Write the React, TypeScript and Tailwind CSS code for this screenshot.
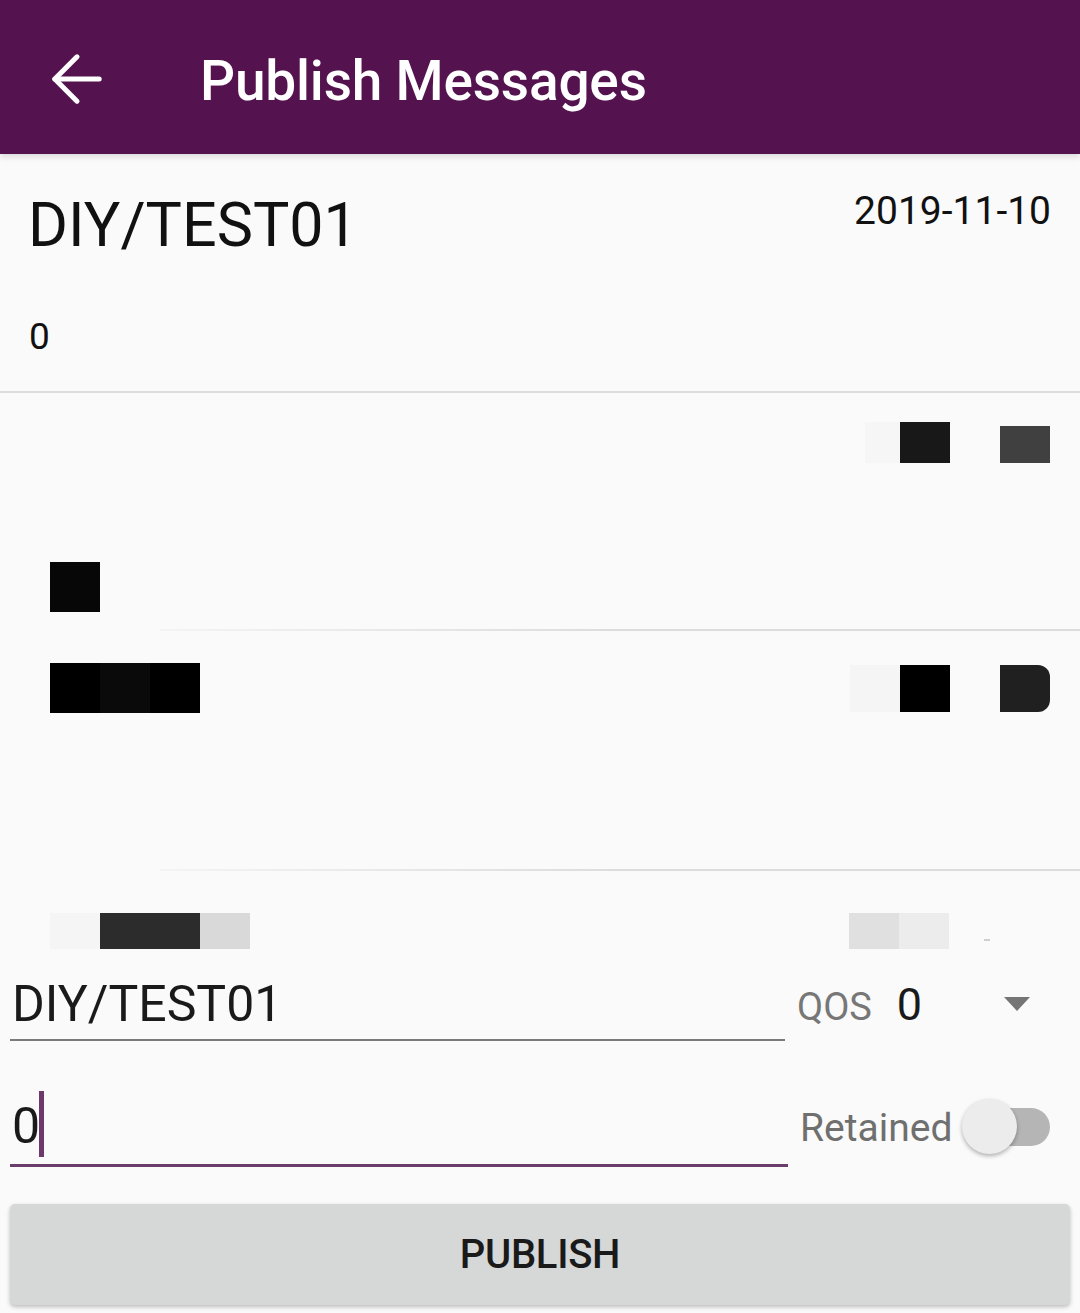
import { ArrowLeft } from 'lucide-react';

// Redacted row placeholder blocks (pixelated in the source screenshot)
function Block({ className }: { className: string }) {
  return <div className={`h-[50px] w-[50px] ${className}`} />;
}

export default function App() {
  return (
    <div className="w-[1080px] h-[1313px] bg-[#fafafa] flex flex-col overflow-hidden font-['Roboto',sans-serif]">
      {/* Toolbar */}
      <header className="h-[154px] shrink-0 bg-[#54134f] flex items-start shadow-[0_3px_6px_rgba(0,0,0,0.12)] z-10">
        <ArrowLeft className="ml-[39px] mt-[41px] w-[76px] h-[76px] text-white" strokeWidth={1.6} />
        <h1 className="ml-[85px] mt-[54px] text-[55px] leading-none font-medium text-white tracking-[-0.2px]">
          Publish Messages
        </h1>
      </header>

      {/* Message list */}
      <div className="flex flex-col">
        {/* Item 1 */}
        <div className="h-[237px] pl-[28px] pr-[29px] pt-[38px] flex flex-col">
          <div className="flex justify-between items-start">
            <span className="mt-[3px] text-[61px] leading-none text-[#111]">DIY/TEST01</span>
            <span className="text-[39px] leading-none text-[#111]">2019-11-10</span>
          </div>
          <span className="ml-[1px] mt-[62px] text-[37px] leading-none text-[#111]">0</span>
        </div>
        <div className="h-[2px] bg-[#dcdcdc]" />

        {/* Item 2 */}
        <div className="h-[236px] flex flex-col">
          <div className="mt-[29px] flex justify-end pr-[30px] gap-[50px]">
            <div className="flex">
              <div className="h-[41px] w-[35px] bg-[#f6f6f6]" />
              <div className="h-[41px] w-[50px] bg-[#181818]" />
            </div>
            <div className="mt-[4px] h-[37px] w-[50px] bg-[#404040]" />
          </div>
          <Block className="ml-[50px] mt-[99px] bg-[#070707]" />
        </div>
        <div className="ml-[160px] h-[2px] bg-gradient-to-r from-[#f4f4f4] via-[#dcdcdc] to-[#dcdcdc]" />

        {/* Item 3 */}
        <div className="h-[238px] flex flex-col">
          <div className="mt-[32px] flex items-start justify-between pl-[50px] pr-[30px]">
            <div className="flex">
              <Block className="bg-black" />
              <Block className="bg-[#0a0a0a]" />
              <Block className="bg-black" />
            </div>
            <div className="flex gap-[50px] items-start">
              <div className="flex">
                <div className="h-[47px] w-[50px] mt-[2px] bg-[#f5f5f5]" />
                <div className="h-[47px] w-[50px] mt-[2px] bg-black" />
              </div>
              <div className="h-[47px] w-[50px] mt-[2px] bg-[#202020] rounded-r-[12px]" />
            </div>
          </div>
        </div>
        <div className="ml-[160px] h-[2px] bg-gradient-to-r from-[#f4f4f4] via-[#dcdcdc] to-[#dcdcdc]" />

        {/* Item 4 (partially hidden) */}
        <div className="h-[89px] flex items-start justify-between pl-[50px] pr-[90px] pt-[42px]">
          <div className="flex">
            <div className="h-[36px] w-[50px] bg-[#f5f5f5]" />
            <div className="h-[36px] w-[100px] bg-[#2c2c2c]" />
            <div className="h-[36px] w-[50px] bg-[#d9d9d9]" />
          </div>
          <div className="flex items-end">
            <div className="h-[36px] w-[50px] bg-[#e0e0e0]" />
            <div className="h-[36px] w-[50px] bg-[#ececec]" />
            <div className="ml-[35px] mb-[8px] h-[2px] w-[6px] bg-[#cfcfcf]" />
          </div>
        </div>
      </div>

      {/* Topic + QoS */}
      <div className="flex items-start">
        <div className="ml-[10px] w-[775px] flex flex-col">
          <span className="mt-[19px] ml-[2px] text-[50px] leading-none text-[#1a1a1a]">DIY/TEST01</span>
          <div className="mt-[10px] h-[2px] bg-[#7a7a7a]" />
        </div>
        <div className="ml-[12px] mt-[22px] flex items-baseline">
          <span className="text-[38px] leading-none text-[#777]">QOS</span>
          <span className="ml-[25px] text-[45px] leading-none text-[#1a1a1a]">0</span>
        </div>
        <div className="ml-[82px] mt-[37px] w-0 h-0 border-l-[13px] border-r-[13px] border-t-[14px] border-l-transparent border-r-transparent border-t-[#757575]" />
      </div>

      {/* Message + Retained */}
      <div className="flex items-start mt-[50px]">
        <div className="ml-[10px] w-[778px] flex flex-col">
          <div className="flex items-start">
            <span className="ml-[2px] mt-[10px] text-[50px] leading-none text-[#1a1a1a]">0</span>
            <div className="ml-[-1px] w-[5px] h-[66px] bg-[#6b3a6b]" />
          </div>
          <div className="mt-[7px] h-[3px] bg-[#6a3d6a]" />
        </div>
        <span className="ml-[12px] mt-[18px] text-[39px] leading-none text-[#6f6f6f]">Retained</span>
        <div className="ml-[10px] mt-[8px] relative w-[90px] h-[56px] flex items-center">
          <div className="ml-[20px] w-[68px] h-[38px] rounded-full bg-[#b5b5b5]" />
          <div className="absolute left-0 top-0 w-[55px] h-[55px] rounded-full bg-[#ececec] shadow-[0_2px_4px_rgba(0,0,0,0.3)]" />
        </div>
      </div>

      {/* Publish button */}
      <button className="mx-[10px] mt-[37px] h-[101px] rounded-[5px] bg-[#d6d7d7] shadow-[0_2px_4px_rgba(0,0,0,0.25)] flex items-center justify-center">
        <span className="text-[40px] leading-none font-medium text-[#1a1a1a] tracking-[-0.3px]">PUBLISH</span>
      </button>
    </div>
  );
}
